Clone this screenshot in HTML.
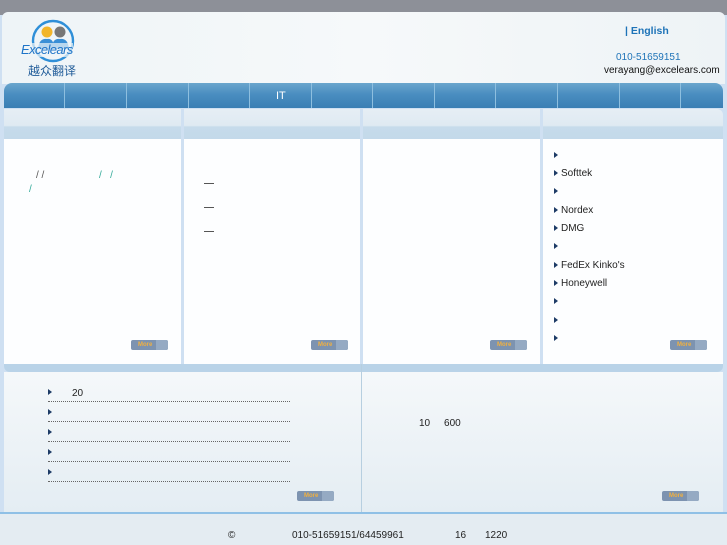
<!DOCTYPE html>
<html><head><meta charset="utf-8"><style>
*{margin:0;padding:0;box-sizing:border-box}
body{width:727px;height:545px;overflow:hidden;background:#cfe0f2;font-family:"Liberation Sans","Noto Sans CJK SC",sans-serif;font-size:10px;color:#222;position:relative}
.a{position:absolute}
.top{left:0;top:0;width:727px;height:15px;background:#8d9098}
.hdr{left:2px;top:12px;width:723px;height:72px;background:linear-gradient(90deg,#eef4f7,#f6f9fa 50%,#eef3f6);border-radius:6px 6px 0 0}
.nav{left:4px;top:83px;width:719px;height:25px;background:linear-gradient(#6aa6cd,#4a8dc0 45%,#3a7fb4);border-radius:8px 8px 0 0}
.nav i{position:absolute;top:0;width:1px;height:25px;background:#8ebfdf}
.ph{top:109px;height:30px;background:linear-gradient(#e6eef5 0,#dfeaf2 55%,#c6dbeb 60%,#c3d9ea 100%)}
.pb{top:139px;height:225px;background:#fdfeff}
.more{width:37px;height:10px;background:#7d93b0;border-radius:2px;font-size:6px;font-weight:bold;color:#f0b040;line-height:10px;padding-left:7px}
.more:after{content:"";position:absolute;right:0;top:0;width:12px;height:10px;background:#95aac3;border-radius:0 2px 2px 0}
.tri{width:0;height:0;border-left:4px solid #1d3b66;border-top:3px solid transparent;border-bottom:3px solid transparent}
.li{font-size:10px;color:#222}
.dot{height:1px;border-top:1px dotted #666;width:242px;left:48px}
</style></head><body>
<div class="a top"></div>
<div class="a hdr"></div>
<svg class="a" style="left:22px;top:18px" width="64" height="46" viewBox="0 0 64 46">
<circle cx="31" cy="23" r="20" fill="none" stroke="#2f8fd8" stroke-width="2.4"/>
<circle cx="25" cy="14" r="5.5" fill="#f2b52a"/><circle cx="38" cy="14" r="5.5" fill="#777"/>
<path d="M16 31 Q17 20 25 21 Q32 20 32 31Z" fill="#3a8fd6"/><path d="M30 31 Q30 20 38 21 Q46 20 47 31Z" fill="#3a8fd6"/>
</svg>
<div class="a" style="left:21px;top:43px;font-size:13px;font-style:italic;color:#1e74c8;letter-spacing:-0.6px;background:rgba(240,245,248,0.7);line-height:14px">Excelears</div>
<div class="a" style="left:28px;top:62px;font-size:12px;color:#1e5a98">越众翻译</div>
<div class="a" style="left:625px;top:25px;font-size:10.5px;color:#1e73b8;font-weight:bold">| English</div>
<div class="a" style="left:616px;top:52px;font-size:10px;color:#1e73b8">010-51659151</div>
<div class="a" style="left:604px;top:65px;font-size:10px;color:#111">verayang@excelears.com</div>
<div class="a nav"><i style="left:60px"></i><i style="left:122px"></i><i style="left:184px"></i><i style="left:245px"></i><i style="left:307px"></i><i style="left:368px"></i><i style="left:430px"></i><i style="left:491px"></i><i style="left:553px"></i><i style="left:615px"></i><i style="left:676px"></i>
<span style="position:absolute;left:272px;top:7px;color:#fff;font-size:11px">IT</span></div>
<div class="a ph" style="left:4px;width:177px"></div>
<div class="a ph" style="left:184px;width:176px"></div>
<div class="a ph" style="left:363px;width:177px"></div>
<div class="a ph" style="left:543px;width:180px;border-radius:0 6px 0 0"></div>
<div class="a pb" style="left:4px;width:177px"></div>
<div class="a pb" style="left:184px;width:176px"></div>
<div class="a pb" style="left:363px;width:177px"></div>
<div class="a pb" style="left:543px;width:180px"></div>
<div class="a" style="left:36px;top:170px;color:#555">/ /</div>
<div class="a" style="left:99px;top:170px;color:#3a9">/ &nbsp; /</div>
<div class="a" style="left:29px;top:184px;color:#3a9">/</div>
<div class="a" style="left:204px;top:183px;width:10px;height:1px;background:#555"></div>
<div class="a" style="left:204px;top:207px;width:10px;height:1px;background:#555"></div>
<div class="a" style="left:204px;top:231px;width:10px;height:1px;background:#555"></div>
<div class="a more" style="left:131px;top:340px">More</div>
<div class="a more" style="left:311px;top:340px">More</div>
<div class="a more" style="left:490px;top:340px">More</div>
<div class="a more" style="left:670px;top:340px">More</div>
<div class="a tri" style="left:554px;top:152px"></div>
<div class="a tri" style="left:554px;top:170px"></div><div class="a li" style="left:561px;top:168px">Softtek</div>
<div class="a tri" style="left:554px;top:188px"></div>
<div class="a tri" style="left:554px;top:207px"></div><div class="a li" style="left:561px;top:205px">Nordex</div>
<div class="a tri" style="left:554px;top:225px"></div><div class="a li" style="left:561px;top:223px">DMG</div>
<div class="a tri" style="left:554px;top:243px"></div>
<div class="a tri" style="left:554px;top:262px"></div><div class="a li" style="left:561px;top:260px">FedEx Kinko's</div>
<div class="a tri" style="left:554px;top:280px"></div><div class="a li" style="left:561px;top:278px">Honeywell</div>
<div class="a tri" style="left:554px;top:298px"></div>
<div class="a tri" style="left:554px;top:317px"></div>
<div class="a tri" style="left:554px;top:335px"></div>
<div class="a" style="left:4px;top:364px;width:719px;height:8px;background:#b9d3e8;border-radius:0 0 6px 6px"></div>
<div class="a" style="left:4px;top:372px;width:719px;height:140px;background:linear-gradient(#f5f8fa,#e4edf3)"></div>
<div class="a" style="left:361px;top:364px;width:1px;height:148px;background:#b7cfe0"></div>
<div class="a tri" style="left:48px;top:389px"></div><div class="a li" style="left:72px;top:388px">20</div>
<div class="a dot" style="top:401px"></div>
<div class="a tri" style="left:48px;top:409px"></div><div class="a dot" style="top:421px"></div>
<div class="a tri" style="left:48px;top:429px"></div><div class="a dot" style="top:441px"></div>
<div class="a tri" style="left:48px;top:449px"></div><div class="a dot" style="top:461px"></div>
<div class="a tri" style="left:48px;top:469px"></div><div class="a dot" style="top:481px"></div>
<div class="a li" style="left:419px;top:418px">10 &nbsp; &nbsp; 600</div>
<div class="a more" style="left:297px;top:491px">More</div>
<div class="a more" style="left:662px;top:491px">More</div>
<div class="a" style="left:0;top:512px;width:727px;height:2px;background:#8fc0e6"></div>
<div class="a" style="left:0;top:514px;width:727px;height:31px;background:#e4ecf2"></div>
<div class="a li" style="left:228px;top:530px">©</div>
<div class="a li" style="left:292px;top:530px">010-51659151/64459961</div>
<div class="a li" style="left:455px;top:530px">16</div>
<div class="a li" style="left:485px;top:530px">1220</div>
</body></html>
